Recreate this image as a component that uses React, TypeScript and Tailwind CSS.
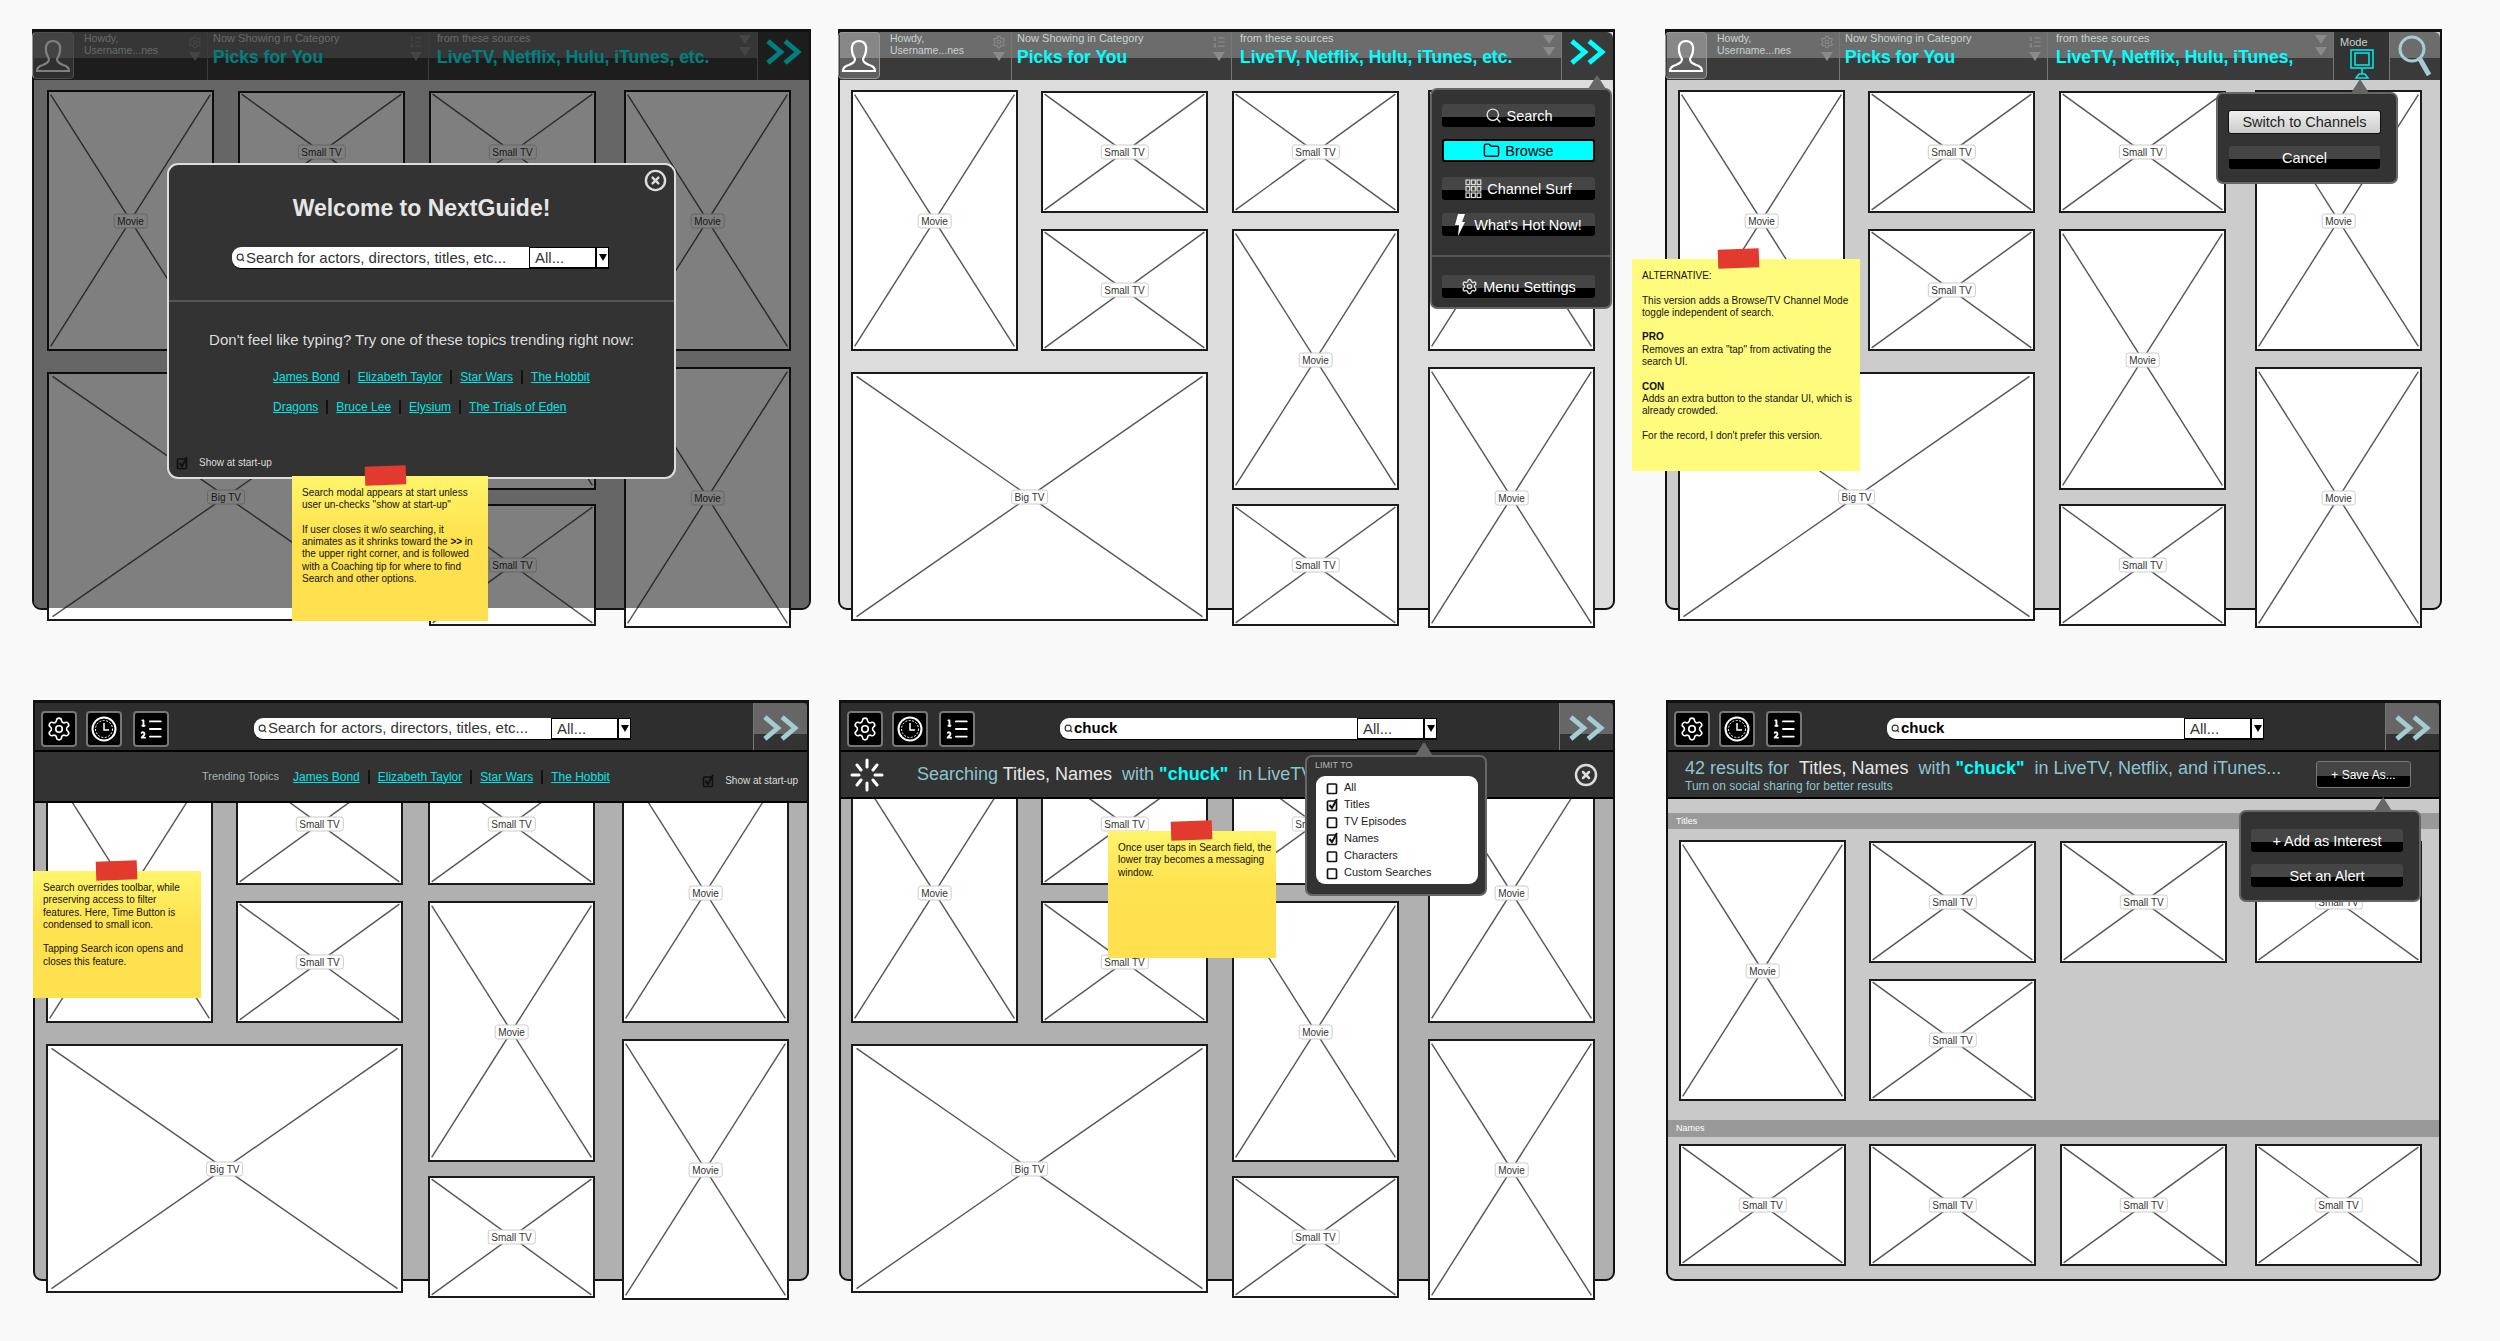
import React from 'react';
import { CircleX, Folder, ListOrdered, Search, Settings } from 'lucide-react';

const gloss = 'bg-[linear-gradient(#6c6c6c_0,#6c6c6c_54%,#3a3a3a_54%,#3a3a3a_100%)]';
const btn = 'bg-[linear-gradient(#454545_0,#454545_55%,#000_55%,#000_100%)]';

const Tile = ({ label, className }: { label: string; className: string }) => (
  <div className={`relative w-[167px] shrink-0 border-2 border-[#1a1a1a] bg-white ${className}`}>
    <svg className="absolute inset-0 h-full w-full">
      <line x1="1%" y1="1%" x2="99%" y2="99%" stroke="#555" strokeWidth="1.4" />
      <line x1="99%" y1="1%" x2="1%" y2="99%" stroke="#555" strokeWidth="1.4" />
    </svg>
    <div className="absolute left-1/2 top-1/2 -translate-x-1/2 -translate-y-1/2 whitespace-nowrap rounded-[3px] border border-[#ccc] bg-white px-[3px] text-[10px] leading-[13px] text-[#333]">
      {label}
    </div>
  </div>
);

const Movie = ({ className = '' }: { className?: string }) => <Tile label="Movie" className={`h-[261px] ${className}`} />;
const Small = ({ className = '' }: { className?: string }) => <Tile label="Small TV" className={`h-[122px] ${className}`} />;

// the tile wall shared by five of the six screens
const Wall = ({ className, gapA, gapB, gapC }: { className: string; gapA: string; gapB: string; gapC: string }) => (
  <div className={`flex ${className}`}>
    <div className="shrink-0">
      <div className={`flex ${gapA}`}>
        <Movie />
        <div className="pt-px">
          <Small />
          <Small className="mt-[16px]" />
        </div>
      </div>
      <Tile label="Big TV" className="mt-[21px] h-[249px] !w-full" />
    </div>
    <div className={`pt-px ${gapB}`}>
      <Small />
      <Movie className="mt-[16px]" />
      <Small className="mt-[14px]" />
    </div>
    <div className={gapC}>
      <Movie />
      <Movie className="mt-[16px]" />
    </div>
  </div>
);

const Chevrons = ({ color }: { color: string }) => (
  <svg width="40" height="28" viewBox="0 0 36 26" fill="none" stroke={color} strokeWidth="4.5">
    <path d="M3 3 L15 13 L3 23" />
    <path d="M19 3 L31 13 L19 23" />
  </svg>
);

const Avatar = () => (
  <svg width="36" height="36" viewBox="0 0 36 36" fill="none" stroke="#fff" strokeWidth="2.2">
    <path d="M18 3 C12 3 10 8 11 13 C11.500 17 13 19 14 21 C14 24 12 25 8 27 C4 28 2 30 2 33 L34 33 C34 30 32 28 28 27 C24 25 22 24 22 21 C23 19 24.500 17 25 13 C26 8 24 3 18 3 Z" />
  </svg>
);

const Tri = ({ className = '' }: { className?: string }) => (
  <div className={`h-0 w-0 border-x-[6px] border-t-[9px] border-x-transparent border-t-[#8a8a8a] ${className}`} />
);

const Pick = ({ label, value, icon, width, pad, clip }: { label: string; value: string; icon: React.ReactNode; width: string; pad: string; clip?: boolean }) => (
  <div className={`relative h-full shrink-0 border-r border-[#777] ${pad} ${width}`}>
    <div className="-mt-px text-[11px] leading-[14px] text-[#c9d2d2]">{label}</div>
    <div className={`whitespace-nowrap text-[17.500px] font-bold leading-[24px] text-[#00ffff] ${clip ? 'overflow-hidden' : ''}`}>{value}</div>
    <div className="absolute right-[5px] top-[3px] flex w-[14px] flex-col items-center gap-[3px]">
      {icon}
      <Tri />
    </div>
  </div>
);

const TopBar = ({ howdy, cat, src, children, sources }: { howdy: string; cat: string; src: string; children: React.ReactNode; sources: string }) => (
  <div className="flex h-[48px] items-stretch">
    <div className={`relative flex shrink-0 ${gloss}`}>
      <div className={`relative h-full shrink-0 border-r border-[#777] ${howdy}`}>
        <div className="absolute -left-[2px] top-[0px] flex h-[47px] w-[42px] items-center justify-center rounded-[4px] border border-[#999] bg-[#ffffff30]">
          <Avatar />
        </div>
        <div className="pl-[50px] text-[10.5px] leading-[12px] text-[#c9d2d2]">
          Howdy,
          <br />
          Username...nes
        </div>
        <div className="absolute right-[5px] top-[3px] flex w-[14px] flex-col items-center gap-[3px]">
          <Settings size={14} color="#8a8a8a" />
          <Tri />
        </div>
      </div>
      <Pick label="Now Showing in Category" value="Picks for You" width={cat} pad="pl-[5px]" icon={<ListOrdered size={14} color="#8a8a8a" />} />
      <Pick label="from these sources" value={sources} width={src} pad="pl-[8px]" clip icon={<Tri />} />
    </div>
    {children}
  </div>
);

const MenuBtn = ({ children, className = '' }: { children: React.ReactNode; className?: string }) => (
  <div className={`flex h-[23px] items-center justify-center gap-[5px] rounded-[3px] text-[14.500px] leading-[18px] text-white ${btn} ${className}`}>
    {children}
  </div>
);

const Popup = ({ children, className, caret }: { children: React.ReactNode; className: string; caret: string }) => (
  <div className={`absolute z-20 rounded-[7px] border-2 border-[#666] bg-[#333] ${className}`}>
    <div className={`absolute -top-[15px] h-0 w-0 border-x-[9px] border-b-[14px] border-x-transparent border-b-[#666] ${caret}`} />
    {children}
  </div>
);

const Note = ({ lines, className, tape, pale }: { lines: React.ReactNode[]; className: string; tape: string; pale?: boolean }) => (
  <div
    className={`absolute z-30 px-[10px] pt-[11px] text-[10px] text-[#111] ${
      pale ? 'bg-[#fffb7d]' : 'bg-[linear-gradient(#fff56a,#ffe24f_42%,#ffe04e)]'
    } ${className}`}
  >
    <div className={`absolute -top-[10px] h-[19px] w-[41px] -rotate-2 bg-[#e23a2e] ${tape}`} />
    {lines.map((line, i) => (
      <div key={i} className="h-[12.300px] whitespace-nowrap leading-[12.300px]">
        {line}
      </div>
    ))}
  </div>
);

const Box = ({ checked, color = '#111' }: { checked?: boolean; color?: string }) => (
  <svg width="14" height="14" viewBox="0 0 14 14" fill="none" stroke={color} className="shrink-0">
    <rect x="1.500" y="3" width="9" height="9.500" rx="1" strokeWidth="1.700" />
    {checked && <path d="M3.500 7 L6 10 L11 1" strokeWidth="2" />}
  </svg>
);

const SearchField = ({ query }: { query?: string }) => (
  <div className="flex h-[22px] w-[377px] items-stretch rounded-l-[9px] border-b border-black text-left">
    <div className="flex w-[297px] items-center gap-[1px] whitespace-nowrap rounded-l-[9px] bg-white pl-[4px] text-[15px] leading-[20px] text-[#333]">
      <Search size={9} color="#333" strokeWidth={3} className="shrink-0" />
      {query ? <b className="text-black">{query}</b> : 'Search for actors, directors, titles, etc...'}
    </div>
    <div className="w-[67px] border border-black bg-white pl-[5px] text-[15px] leading-[20px] text-[#333]">All...</div>
    <div className="flex w-[13px] items-center justify-center border border-black bg-white">
      <div className="h-0 w-0 border-x-[4px] border-t-[7px] border-x-transparent border-t-black" />
    </div>
  </div>
);

const IconBtn = ({ children, className = '' }: { children: React.ReactNode; className?: string }) => (
  <div className={`flex h-[36px] w-[36px] shrink-0 items-center justify-center rounded-[4px] border-2 border-[#777] bg-black ${className}`}>
    {children}
  </div>
);

const ClockDial = () => (
  <svg width="26" height="26" viewBox="0 0 26 26" fill="none" stroke="#fff">
    <circle cx="13" cy="13" r="11.500" strokeWidth="2" />
    <circle cx="13" cy="13" r="8.500" strokeWidth="1" strokeDasharray="2 1.500" />
    <path d="M13 7 L13 14 L18 14" strokeWidth="1.500" />
  </svg>
);

const SearchBar = ({ query }: { query?: string }) => (
  <div className="flex h-[49px] border-b-2 border-black bg-[#2e2e2e] pl-[6px]">
    <div className="flex items-center pt-[4px]">
      <IconBtn>
        <Settings size={26} color="#fff" strokeWidth={1.500} />
      </IconBtn>
      <IconBtn className="ml-[9px]">
        <ClockDial />
      </IconBtn>
      <IconBtn className="ml-[11px]">
        <ListOrdered size={26} color="#fff" strokeWidth={1.700} />
      </IconBtn>
      <div className="ml-[85px]">
        <SearchField query={query} />
      </div>
    </div>
    <div className="ml-auto flex h-[47px] w-[54px] items-center justify-center rounded-tr-[4px] border-l border-[#777] bg-[linear-gradient(#666_0,#666_66%,#333_66%,#333_100%)] pt-[3px]">
      <Chevrons color="#a4ccd2" />
    </div>
  </div>
);

const Screen = ({ bg, className, children }: { bg: string; className: string; children: React.ReactNode }) => (
  <div className={`relative h-[581px] shrink-0 rounded-b-[9px] border-2 border-t-[3px] border-[#111] ${bg} ${className}`}>{children}</div>
);

const Link = ({ children, last }: { children: string; last?: boolean }) => (
  <span className={`whitespace-nowrap leading-[22px] ${last ? '' : 'mr-[8px] border-r-2 border-[#111] pr-[8px]'}`}>
    <span className="text-[#00e5e5] underline">{children}</span>
  </span>
);

const Spinner = () => (
  <svg width="34" height="34" viewBox="0 0 34 34" stroke="#fff" strokeWidth="3" strokeLinecap="round">
    <path d="M17 2 V9 M17 25 V32 M2 17 H9 M25 17 H32 M7 7 L11 12 M27 7 L23 12 M7 27 L11 22 M27 27 L23 22" />
  </svg>
);

const Monitor = () => (
  <svg width="24" height="30" viewBox="0 0 24 30" fill="none" stroke="#00e5e5" strokeWidth="1.600">
    <rect x="1" y="1" width="22" height="18" />
    <rect x="5" y="4" width="14" height="12" />
    <path d="M12 19 V25 M6 29 L9 25 H15 L18 29 Z" />
  </svg>
);

const Grid9 = () => (
  <svg width="17" height="20" viewBox="0 0 17 20" fill="none" stroke="#ddd" strokeWidth="1.200">
    {[0, 1, 2].map((r) =>
      [0, 1, 2].map((c) => <rect key={`${r}${c}`} x={1 + c * 5.500} y={1 + r * 6.500} width="3.800" height="4.500" />),
    )}
  </svg>
);

const Bolt = () => (
  <svg width="10" height="22" viewBox="0 0 10 22" fill="#fff">
    <polygon points="3,0 10,0 7,8 10,8 3,22 4,11 0,11" />
  </svg>
);

export default function App() {
  return (
    <div className="h-[1341px] w-[2500px] overflow-hidden bg-[#f9f9f9] font-['Liberation_Sans',Arial,sans-serif]">
      <div className="flex h-[700px] pt-[29px]">
        {/* welcome modal */}
        <Screen bg="bg-[#cccccc]" className="ml-[32px] w-[779px]">
          <TopBar howdy="w-[174px]" cat="w-[221px]" src="w-[329px]" sources="LiveTV, Netflix, Hulu, iTunes, etc.">
            <div className="flex flex-1 items-center justify-center bg-[#3a3a3a] pb-[8px]">
              <Chevrons color="#00ffff" />
            </div>
          </TopBar>
          <Wall className="pl-[13px] pt-[10px]" gapA="gap-[24px]" gapB="ml-[24px]" gapC="ml-[28px]" />
          <div className="absolute inset-0 z-10 rounded-b-[7px] bg-black/50" />
          <div className="absolute left-[133px] top-[131px] z-20 h-[316px] w-[509px] rounded-[11px] border-2 border-[#ddd] bg-[#333] text-center">
            <CircleX size={23} color="#ddd" strokeWidth={2.500} className="absolute right-[7px] top-[4px]" />
            <div className="pt-[29px] text-[23px] font-bold leading-[28px] text-[#e6e6e6]">Welcome to NextGuide!</div>
            <div className="ml-[63px] mt-[25px]">
              <SearchField />
            </div>
            <div className="mt-[31px] border-t-2 border-[#555]" />
            <div className="pt-[29px] text-[15px] leading-[18px] text-[#ddd]">Don't feel like typing? Try one of these topics trending right now:</div>
            <div className="mt-[17px] pl-[104px] text-left text-[12px]">
              <Link>James Bond</Link>
              <Link>Elizabeth Taylor</Link>
              <Link>Star Wars</Link>
              <Link last>The Hobbit</Link>
            </div>
            <div className="mt-[8px] pl-[104px] text-left text-[12px]">
              <Link>Dragons</Link>
              <Link>Bruce Lee</Link>
              <Link>Elysium</Link>
              <Link last>The Trials of Eden</Link>
            </div>
            <div className="absolute bottom-[7px] left-[7px] flex items-center gap-[9px] text-[10px] text-[#ddd]">
              <Box checked />
              Show at start-up
            </div>
          </div>
          <Note
            className="left-[258px] top-[444px] h-[145px] w-[196px]"
            tape="left-[73px]"
            lines={[
              'Search modal appears at start unless',
              'user un-checks "show at start-up"',
              '',
              'If user closes it w/o searching, it',
              <>
                animates as it shrinks toward the <b>&gt;&gt;</b> in
              </>,
              'the upper right corner, and is followed',
              'with a Coaching tip for where to find',
              'Search and other options.',
            ]}
          />
        </Screen>

        {/* main menu */}
        <Screen bg="bg-[#dcdcdc]" className="ml-[27px] w-[777px]">
          <TopBar howdy="w-[172px]" cat="w-[220px]" src="w-[330px]" sources="LiveTV, Netflix, Hulu, iTunes, etc.">
            <div className="flex flex-1 items-center justify-center rounded-tr-[6px] bg-[#3a3a3a] pb-[8px]">
              <Chevrons color="#00ffff" />
            </div>
          </TopBar>
          <Wall className="pl-[11px] pt-[10px]" gapA="gap-[23px]" gapB="ml-[24px]" gapC="ml-[29px]" />
          <Popup className="left-[590px] top-[56px] h-[221px] w-[182px] pl-[10px] pr-[15px] pt-[14px]" caret="right-[4px]">
            <MenuBtn>
              <Search size={17} color="#ddd" />
              Search
            </MenuBtn>
            <MenuBtn className="mt-[12px] !bg-none !bg-[#00ffff] border-2 border-black !text-black">
              <Folder size={17} color="#111" />
              Browse
            </MenuBtn>
            <MenuBtn className="mt-[15px]">
              <Grid9 />
              Channel Surf
            </MenuBtn>
            <MenuBtn className="mt-[13px]">
              <Bolt />
              <span className="ml-[4px]">What's Hot Now!</span>
            </MenuBtn>
            <div className="-ml-[10px] -mr-[15px] mt-[19px] border-t-2 border-[#555]" />
            <MenuBtn className="mt-[18px]">
              <Settings size={17} color="#ddd" />
              Menu Settings
            </MenuBtn>
          </Popup>
        </Screen>

        {/* mode toggle alternative */}
        <Screen bg="bg-[#cccccc]" className="ml-[50px] w-[777px]">
          <TopBar howdy="w-[173px]" cat="w-[208px]" src="w-[286px]" sources="LiveTV, Netflix, Hulu, iTunes,">
            <div className="w-[56px] shrink-0 border-r border-[#777] bg-[#333] pl-[6px] pt-[3px] text-[11px] leading-[14px] text-[#c9d2d2]">
              Mode
              <div className="ml-[10px]">
                <Monitor />
              </div>
            </div>
            <div className={`flex flex-1 items-center justify-center rounded-tr-[6px] ${gloss}`}>
              <svg width="34" height="44" viewBox="0 0 34 44" fill="none" stroke="#a4ccd2" strokeWidth="3">
                <circle cx="14" cy="15" r="12" />
                <path d="M22 25 L31 41" strokeWidth="5" />
              </svg>
            </div>
          </TopBar>
          <Wall className="pl-[11px] pt-[10px]" gapA="gap-[23px]" gapB="ml-[24px]" gapC="ml-[29px]" />
          <Popup className="left-[549px] top-[60px] h-[92px] w-[182px] pl-[11px] pr-[16px] pt-[17px]" caret="right-[27px]">
            <div className="h-[22px] rounded-[2px] bg-[linear-gradient(#eee,#ccc)] text-center text-[14.500px] leading-[22px] text-[#222] shadow-[0_0_0_1px_#111]">
              Switch to Channels
            </div>
            <MenuBtn className="mt-[13px]">Cancel</MenuBtn>
          </Popup>
          <Note
            pale
            className="-left-[35px] top-[227px] h-[212px] w-[228px]"
            tape="left-[86px]"
            lines={[
              'ALTERNATIVE:',
              '',
              'This version adds a Browse/TV Channel Mode',
              'toggle independent of search.',
              '',
              <b>PRO</b>,
              'Removes an extra "tap" from activating the',
              'search UI.',
              '',
              <b>CON</b>,
              'Adds an extra button to the standar UI, which is',
              'already crowded.',
              '',
              "For the record, I don't prefer this version.",
            ]}
          />
        </Screen>
      </div>

      <div className="flex">
        {/* search takes over the toolbar */}
        <Screen bg="bg-[#b0b0b0]" className="ml-[33px] w-[776px]">
          <SearchBar />
          <div className="relative z-10 flex h-[51px] items-center border-b-2 border-black bg-[#333] pl-[167px]">
            <span className="mr-[14px] text-[11px] text-[#a3b3b3]">Trending Topics</span>
            <span className="text-[12px]">
              <Link>James Bond</Link>
              <Link>Elizabeth Taylor</Link>
              <Link>Star Wars</Link>
              <Link last>The Hobbit</Link>
            </span>
            <span className="ml-auto mr-[9px] mt-[8px] flex items-center gap-[9px] text-[10px] text-[#ddd]">
              <Box checked />
              Show at start-up
            </span>
          </div>
          <Wall className="-mt-[41px] pl-[11px]" gapA="gap-[23px]" gapB="ml-[25px]" gapC="ml-[27px]" />
          <Note
            className="-left-[2px] top-[168px] h-[127px] w-[168px]"
            tape="left-[63px]"
            lines={[
              'Search overrides toolbar, while',
              'preserving access to filter',
              'features. Here, Time Button is',
              'condensed to small icon.',
              '',
              'Tapping Search icon opens and',
              'closes this feature.',
            ]}
          />
        </Screen>

        {/* searching state */}
        <Screen bg="bg-[#b0b0b0]" className="ml-[30px] w-[776px]">
          <SearchBar query="chuck" />
          <div className="relative z-10 flex h-[47px] items-center border-b-2 border-black bg-[#333] pl-[9px] text-[18px] text-[#8ec5cc]">
            <Spinner />
            <span className="ml-[33px] whitespace-nowrap">
              Searching <span className="text-[#e6e6e6]">Titles, Names</span> &nbsp;with <b className="text-[#00ffff]">"chuck"</b> &nbsp;in LiveTV
            </span>
            <CircleX size={24} color="#ddd" strokeWidth={2.500} className="absolute right-[15px] top-[11px]" />
          </div>
          <Wall className="-mt-[37px] pl-[10px]" gapA="gap-[23px]" gapB="ml-[24px]" gapC="ml-[29px]" />
          <Popup className="left-[464px] top-[52px] h-[141px] w-[182px]" caret="left-[108px]">
            <div className="pl-[8px] pt-[1px] text-[9px] leading-[14px] text-[#b5b5b5]">LIMIT TO</div>
            <div className="ml-[9px] mt-[4px] h-[108px] w-[162px] rounded-[9px] bg-white pl-[10px] pt-[3px] text-[11px] text-[#222]">
              {[
                ['All', false],
                ['Titles', true],
                ['TV Episodes', false],
                ['Names', true],
                ['Characters', false],
                ['Custom Searches', false],
              ].map(([name, on]) => (
                <div key={name as string} className="flex h-[17px] items-center gap-[4px]">
                  <Box checked={on as boolean} />
                  {name}
                </div>
              ))}
            </div>
          </Popup>
          <Note
            className="left-[267px] top-[128px] h-[127px] w-[168px]"
            tape="left-[63px]"
            lines={['Once user taps in Search field, the', 'lower tray becomes a messaging', 'window.']}
          />
        </Screen>

        {/* results */}
        <Screen bg="bg-[#c9c9c9]" className="ml-[51px] w-[775px]">
          <SearchBar query="chuck" />
          <div className="relative flex h-[47px] border-b-2 border-black bg-[#333] pl-[17px] text-[#8ec5cc]">
            <div>
              <div className="whitespace-nowrap pt-[5px] text-[18px] leading-[22px]">
                42 results for &nbsp;<span className="text-[#e6e6e6]">Titles, Names</span> &nbsp;with <b className="text-[#00ffff]">"chuck"</b> &nbsp;in LiveTV, Netflix, and iTunes...
              </div>
              <div className="text-[12px] leading-[15px]">Turn on social sharing for better results</div>
            </div>
            <div className={`ml-auto mr-[28px] mt-[9px] h-[27px] w-[95px] shrink-0 rounded-[3px] border border-[#777] text-center text-[12px] leading-[26px] text-white ${btn}`}>
              + Save As...
            </div>
          </div>
          <div className="mt-[14px] h-[16px] bg-[#999] pl-[8px] text-[9px] leading-[16px] text-white">Titles</div>
          <div className="flex pl-[11px] pt-[11px]">
            <Movie />
            <div className="ml-[23px] pt-px">
              <Small />
              <Small className="mt-[16px]" />
            </div>
            <Small className="ml-[24px] mt-px" />
            <Small className="ml-[28px] mt-px" />
          </div>
          <div className="mt-[19px] h-[17px] bg-[#999] pl-[8px] text-[9px] leading-[17px] text-white">Names</div>
          <div className="flex pl-[11px] pt-[7px]">
            <Small />
            <Small className="ml-[23px]" />
            <Small className="ml-[24px]" />
            <Small className="ml-[28px]" />
          </div>
          <Popup className="left-[571px] top-[107px] h-[92px] w-[182px] pl-[10px] pr-[16px] pt-[17px]" caret="right-[27px]">
            <MenuBtn>+ Add as Interest</MenuBtn>
            <MenuBtn className="mt-[12px]">Set an Alert</MenuBtn>
          </Popup>
        </Screen>
      </div>
    </div>
  );
}
